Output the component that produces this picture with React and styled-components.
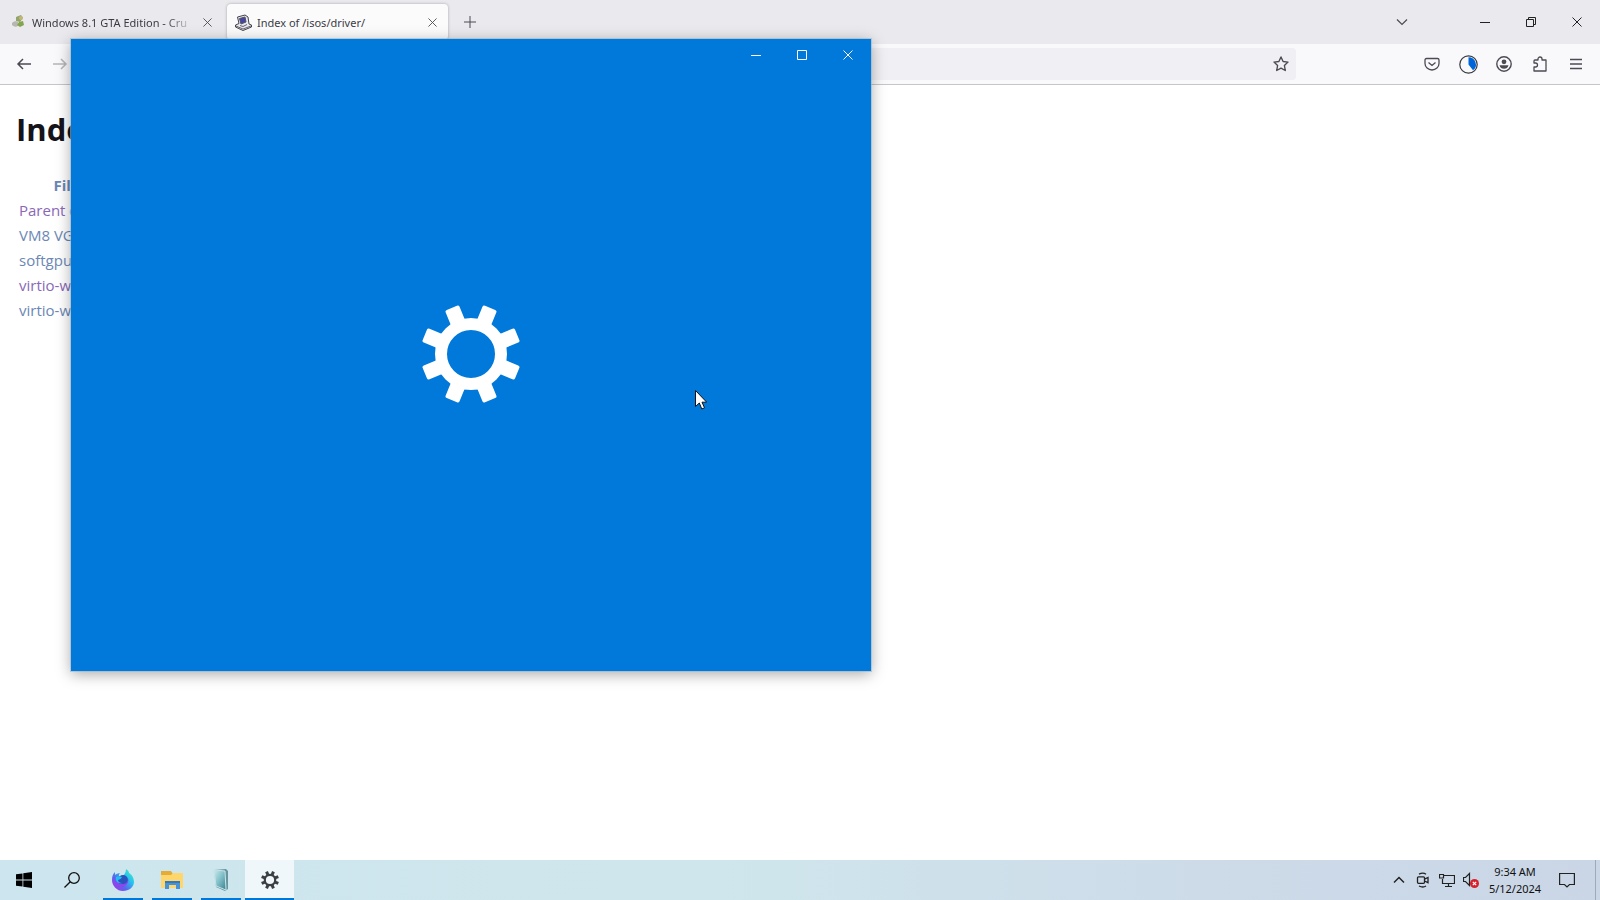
import styled, { createGlobalStyle } from 'styled-components'

const GlobalStyle = createGlobalStyle`
  * {
    box-sizing: border-box;
  }
  body {
    margin: 0;
    font-family: 'Noto Sans', 'Open Sans', sans-serif;
    color: #15141a;
    overflow: hidden;
  }
  button {
    font: inherit;
    color: inherit;
    border: 0;
    padding: 0;
    background: transparent;
  }
  svg {
    display: block;
    flex: none;
  }
`

const Desktop = styled.div`
  position: relative;
  display: flex;
  flex-direction: column;
  height: 100vh;
  background: #fff;
`

const Browser = styled.main`
  flex: 1;
  display: flex;
  flex-direction: column;
  min-height: 0;
`

const TabBar = styled.div`
  display: flex;
  align-items: stretch;
  height: 44px;
  background: #eae9ed;
`

const Tab = styled.div`
  display: flex;
  align-items: center;
  gap: 5px;
  width: ${({ $active }) => ($active ? '221px' : '223px')};
  margin: 4px 4px 4px 0;
  padding: 0 8px 0 ${({ $active }) => ($active ? '8px' : '11px')};
  border-radius: 4px;
  font-size: 11px;
  color: #3c3b44;
  background: ${({ $active }) => ($active ? '#fbfbfc' : 'transparent')};
  box-shadow: ${({ $active }) => ($active ? '0 0 3px rgba(0, 0, 0, 0.3)' : 'none')};
`

const TabTitle = styled.span`
  flex: 1;
  overflow: hidden;
  white-space: nowrap;
  mask-image: ${({ $fade }) => ($fade ? 'linear-gradient(to left, transparent, #000 28px)' : 'none')};
`

const IconButton = styled.button`
  display: grid;
  place-items: center;
  width: ${({ $width }) => $width || 36}px;
  height: ${({ $height }) => $height || 32}px;
  color: ${({ $color }) => $color || '#4c4b53'};
`

const TabListButton = styled(IconButton)`
  margin-right: 48px;
`

const WindowButtons = styled.div`
  display: flex;
  align-items: center;
  margin-left: auto;
`

const Toolbar = styled.div`
  display: flex;
  align-items: center;
  height: 41px;
  padding: 0 6px;
  background: #f9f9fb;
  border-bottom: 1px solid #c6c6c9;
`

const AddressBar = styled.div`
  flex: 1;
  display: flex;
  align-items: center;
  height: 32px;
  margin: 0 118px 0 190px;
  border-radius: 4px;
  background: #f0f0f4;
`

const AddressInput = styled.input`
  flex: 1;
  border: 0;
  background: transparent;
  outline: none;
`

const Page = styled.section`
  flex: 1;
  padding: 23px 16px;
  font-family: 'Open Sans', 'Noto Sans', sans-serif;
`

const Heading = styled.h1`
  margin: 0 0 23px;
  font-size: 31px;
  line-height: 42px;
  font-weight: 700;
  white-space: nowrap;
`

const FileTable = styled.table`
  border-collapse: collapse;
  font-size: 15px;
  line-height: 25px;

  th,
  td {
    padding: 0 3px;
    white-space: nowrap;
  }
  th {
    width: 150px;
    text-align: center;
  }
`

const FileLink = styled.a`
  text-decoration: none;
  color: ${({ $visited }) => ($visited ? '#8a68b8' : '#6b87b5')};
`

const SettingsWindow = styled.section`
  position: absolute;
  top: 39px;
  left: 71px;
  width: 800px;
  height: 632px;
  display: flex;
  flex-direction: column;
  color: #fff;
  background: #0079da;
  box-shadow: 0 0 0 1px rgba(150, 185, 205, 0.6), 0 3px 14px rgba(0, 0, 0, 0.35);
`

const TitleBar = styled.header`
  display: flex;
  justify-content: flex-end;
  height: 32px;
`

const Splash = styled.div`
  flex: 1;
  display: grid;
  place-items: center;
  padding-bottom: 34px;
`

const Pointer = styled.svg`
  position: absolute;
  top: 390px;
  left: 695px;
`

const Taskbar = styled.footer`
  display: flex;
  height: 40px;
  color: #111;
  background: linear-gradient(to right, #cde5ee, #cfe6ec 45%, #cddbe9 75%, #cad6e6);
`

const TaskButton = styled.button`
  display: grid;
  place-items: center;
  width: 48px;
  height: 40px;
  background-color: ${({ $active }) => ($active ? '#eff7fa' : 'transparent')};
`

const RunningApps = styled.div`
  display: flex;
  margin-left: 2px;
`

const RunningButton = styled(TaskButton)`
  width: 49px;
  background-image: linear-gradient(#0078d7, #0078d7);
  background-size: ${({ $active }) => ($active ? '100%' : '40px')} 2px;
  background-position: bottom center;
  background-repeat: no-repeat;
`

const Tray = styled.div`
  display: flex;
  align-items: center;
  margin-left: auto;
`

const Clock = styled.time`
  width: 64px;
  font-size: 11px;
  line-height: 17px;
  text-align: center;
  white-space: nowrap;
`

const ShowDesktop = styled.button`
  width: 5px;
  height: 40px;
  margin-left: 8px;
  border-left: 1px solid #9faab8;
`

const files = [
  { name: 'Parent directory/', visited: true },
  { name: 'VM8 VGA driver/' },
  { name: 'softgpu.iso' },
  { name: 'virtio-win.iso', visited: true },
  { name: 'virtio-win-old.iso' },
]

const toothAngles = [22.5, 67.5, 112.5, 157.5, 202.5, 247.5, 292.5, 337.5]

function Icon({ size = 16, box = 16, stroke = 1, children }) {
  return (
    <svg
      width={size}
      height={size}
      viewBox={`0 0 ${box} ${box}`}
      fill="none"
      stroke="currentColor"
      strokeWidth={stroke}
      aria-hidden="true"
    >
      {children}
    </svg>
  )
}

const CloseIcon = ({ size = 10 }) => (
  <Icon size={size} box={10}>
    <path d="M.5.5l9 9M9.5.5l-9 9" />
  </Icon>
)

const MinimizeIcon = () => (
  <Icon size={10} box={10}>
    <path d="M0 5.5h10" />
  </Icon>
)

const MaximizeIcon = () => (
  <Icon size={10} box={10}>
    <path d="M.5.5h9v9h-9z" />
  </Icon>
)

const RestoreIcon = () => (
  <Icon size={10} box={10}>
    <path d="M.5 2.5h7v7h-7zM2.5 2.5v-2h7v7h-2" />
  </Icon>
)

function SettingsGear() {
  return (
    <svg width="98" height="98" viewBox="-49 -49 98 98" aria-label="Settings">
      <circle r="30" fill="none" stroke="#fff" strokeWidth="12" />
      {toothAngles.map((angle) => (
        <rect key={angle} x="-7.5" y="-50" width="15" height="19" rx="2" fill="#fff" transform={`rotate(${angle})`} />
      ))}
    </svg>
  )
}

function SmallGear() {
  return (
    <svg width="18" height="18" viewBox="-9 -9 18 18" aria-hidden="true">
      <circle r="5.2" fill="none" stroke="#3b3f42" strokeWidth="2.2" />
      {toothAngles.map((angle) => (
        <rect key={angle} x="-1.5" y="-9" width="3" height="3.6" fill="#3b3f42" transform={`rotate(${angle})`} />
      ))}
    </svg>
  )
}

function GreenFavicon() {
  return (
    <svg width="16" height="16" viewBox="0 0 16 16" aria-hidden="true">
      <path d="M1 9c2-2 4-2 6-1v4c-2 1-4 1-6-1z" fill="#b5b8b0" />
      <path d="M5 3l5-2 2 3-3 4-4-1z" fill="#91a46b" />
      <path d="M8 8l4-1 1 4-4 2-3-2z" fill="#83a54b" />
      <circle cx="10" cy="4" r="2" fill="#c4b678" />
    </svg>
  )
}

function ComputerFavicon() {
  return (
    <svg width="17" height="17" viewBox="0 0 17 17" aria-hidden="true">
      <path d="M2.5 3L10 1l3 2 1 7 2.5 1v2L8 16.5.5 13v-2L4 9.5z" fill="#e8e8ee" stroke="#44444c" />
      <path d="M4.5 4.5L10 3l1 5-5 2z" fill="#4545a8" stroke="#55555f" />
      <path d="M1 12l7 3 8-3M5 11.5l3 1 4-2" fill="none" stroke="#66666f" />
    </svg>
  )
}

function FirefoxIcon() {
  return (
    <svg width="24" height="24" viewBox="0 0 24 24" aria-hidden="true">
      <defs>
        <linearGradient id="fox" x1="1" y1="0" x2="0" y2="1">
          <stop offset="0" stopColor="#4ff0b8" />
          <stop offset=".35" stopColor="#24c4ee" />
          <stop offset=".65" stopColor="#5b62ef" />
          <stop offset="1" stopColor="#b72be2" />
        </linearGradient>
      </defs>
      <path
        d="M15 1c2 1 3 3 3 4 2 1 5 4 5 9 0 5-5 9-11 9S1 18 1 12c0-4 1-6 3-8v3c1-1 3-2 5-2-1 1-1 2-1 3l3 1c2-2 4-4 4-8z"
        fill="url(#fox)"
      />
      <circle cx="12" cy="12" r="5" fill="#2854bd" />
      <path d="M2 13c2 6 9 8 13 4 2-2 3-4 2-7 0 4-2 6-6 6-3 0-4-1-5-3z" fill="#8d45ed" />
      <path d="M5 9c2-1 4-1 6 0-1 2-2 2-4 3 0 2 2 3 4 3-4 1-7-2-6-6z" fill="#22bdf0" />
    </svg>
  )
}

function FolderIcon() {
  return (
    <svg width="22" height="20" viewBox="0 0 22 20" aria-hidden="true">
      <path d="M0 1h10l2 3h10v14H0z" fill="#e5ab37" />
      <path d="M12 3h10v15H0V5h10z" fill="#ffd66b" />
      <path d="M4 19v-8h15v8h-4v-4H8v4z" fill="#4592d8" />
      <path d="M4 11h15v2H4z" fill="#3577bb" />
    </svg>
  )
}

function GlassIcon() {
  return (
    <svg width="16" height="24" viewBox="0 0 16 24" aria-hidden="true">
      <defs>
        <linearGradient id="glass" x1="0" y1="0" x2="1" y2="1">
          <stop offset="0" stopColor="#c9ecef" />
          <stop offset=".5" stopColor="#7fbdc6" />
          <stop offset="1" stopColor="#37808e" />
        </linearGradient>
      </defs>
      <path d="M1 2l12-1 2 2v18l-3 2-9-4z" fill="#67959f" />
      <path d="M1 2l11 1 1 19-10-4z" fill="url(#glass)" stroke="#c7e5e8" />
    </svg>
  )
}

function BrowserTabs() {
  return (
    <TabBar>
      <Tab>
        <GreenFavicon />
        <TabTitle $fade>Windows 8.1 GTA Edition - Cru</TabTitle>
        <IconButton $width={16} $height={20} aria-label="Close tab">
          <CloseIcon size={9} />
        </IconButton>
      </Tab>
      <Tab $active>
        <ComputerFavicon />
        <TabTitle>Index of /isos/driver/</TabTitle>
        <IconButton $width={16} $height={20} aria-label="Close tab">
          <CloseIcon size={9} />
        </IconButton>
      </Tab>
      <IconButton $height={44} aria-label="New tab">
        <Icon size={12} box={12}>
          <path d="M6 0v12M0 6h12" />
        </Icon>
      </IconButton>
      <WindowButtons>
        <TabListButton $width={24} aria-label="List all tabs">
          <Icon size={12} box={12} stroke={1.2}>
            <path d="M1 3.5l5 5 5-5" />
          </Icon>
        </TabListButton>
        <IconButton $width={46} $color="#222" aria-label="Minimize">
          <MinimizeIcon />
        </IconButton>
        <IconButton $width={46} $color="#222" aria-label="Restore">
          <RestoreIcon />
        </IconButton>
        <IconButton $width={46} $color="#222" aria-label="Close">
          <CloseIcon />
        </IconButton>
      </WindowButtons>
    </TabBar>
  )
}

function BrowserToolbar() {
  return (
    <Toolbar>
      <IconButton aria-label="Back">
        <Icon stroke={1.5}>
          <path d="M15 8H2M7 3L2 8l5 5" />
        </Icon>
      </IconButton>
      <IconButton $color="#b5b5ba" aria-label="Forward">
        <Icon stroke={1.5}>
          <path d="M1 8h13M9 3l5 5-5 5" />
        </Icon>
      </IconButton>
      <AddressBar>
        <AddressInput aria-label="Address" />
        <IconButton $width={30} aria-label="Bookmark this page">
          <Icon stroke={1.4}>
            <path
              d="M8 1l2.1 4.5 4.9.6-3.6 3.4.9 5L8 12.1l-4.3 2.4.9-5L1 6.1l4.9-.6z"
              strokeLinejoin="round"
            />
          </Icon>
        </IconButton>
      </AddressBar>
      <IconButton aria-label="Save to Pocket">
        <Icon stroke={1.3}>
          <path d="M2.5 2.5h11q1.5 0 1.5 1.5v3.5a7 6.5 0 01-14 0V4q0-1.5 1.5-1.5zM4.5 6.5L8 9.5l3.5-3" />
        </Icon>
      </IconButton>
      <IconButton $color="#38383d" aria-label="Download progress">
        <Icon size={19} box={19} stroke={1.2}>
          <circle cx="9.5" cy="9.5" r="8.7" />
          <path d="M9.5 2.2a7.3 7.3 0 014.5 13.1L9.5 9.5z" fill="#0065d8" stroke="none" />
        </Icon>
      </IconButton>
      <IconButton aria-label="Account">
        <Icon stroke={1.4}>
          <circle cx="8" cy="8" r="7.2" />
          <circle cx="8" cy="5.8" r="2.4" fill="currentColor" stroke="none" />
          <path d="M3.5 9.3h9c-.5 2.5-2.2 3.5-4.5 3.5s-4-1-4.5-3.5z" fill="currentColor" stroke="none" />
        </Icon>
      </IconButton>
      <IconButton aria-label="Extensions">
        <Icon stroke={1.3}>
          <path d="M2 15v-4h1.5a1.7 1.7 0 000-4H2V5q0-1 1-1h3V3a2 2 0 014 0v1h4v11z" strokeLinejoin="round" />
        </Icon>
      </IconButton>
      <IconButton aria-label="Open menu">
        <Icon stroke={1.3}>
          <path d="M2 3.5h12M2 8h12M2 12.5h12" />
        </Icon>
      </IconButton>
    </Toolbar>
  )
}

function Listing() {
  return (
    <Page>
      <Heading>Index of /isos/driver/</Heading>
      <FileTable>
        <thead>
          <tr>
            <th scope="col">
              <FileLink href="#name">File Name</FileLink>
            </th>
          </tr>
        </thead>
        <tbody>
          {files.map((file) => (
            <tr key={file.name}>
              <td>
                <FileLink href="#file" $visited={file.visited}>
                  {file.name}
                </FileLink>
              </td>
            </tr>
          ))}
        </tbody>
      </FileTable>
    </Page>
  )
}

function Settings() {
  return (
    <SettingsWindow aria-label="Settings">
      <TitleBar>
        <IconButton $width={46} $color="#fff" aria-label="Minimize">
          <MinimizeIcon />
        </IconButton>
        <IconButton $width={46} $color="#fff" aria-label="Maximize">
          <MaximizeIcon />
        </IconButton>
        <IconButton $width={46} $color="#fff" aria-label="Close">
          <CloseIcon />
        </IconButton>
      </TitleBar>
      <Splash>
        <SettingsGear />
      </Splash>
    </SettingsWindow>
  )
}

function SystemTaskbar() {
  return (
    <Taskbar>
      <TaskButton aria-label="Start">
        <svg width="16" height="16" viewBox="0 0 16 16" aria-hidden="true">
          <path d="M0 2.3l6.5-.9v6.2H0zM7.3 1.3L16 0v7.6H7.3zM0 8.4h6.5v6.2L0 13.7zM7.3 8.4H16V16l-8.7-1.3z" />
        </svg>
      </TaskButton>
      <TaskButton aria-label="Search">
        <Icon stroke={1.3}>
          <circle cx="10" cy="6" r="5.3" />
          <path d="M6.3 9.7L.5 15.5" />
        </Icon>
      </TaskButton>
      <RunningApps>
        <RunningButton aria-label="Firefox">
          <FirefoxIcon />
        </RunningButton>
        <RunningButton aria-label="File Explorer">
          <FolderIcon />
        </RunningButton>
        <RunningButton aria-label="Server">
          <GlassIcon />
        </RunningButton>
        <RunningButton $active aria-label="Settings">
          <SmallGear />
        </RunningButton>
      </RunningApps>
      <Tray>
        <IconButton $width={24} $color="#222" aria-label="Show hidden icons">
          <Icon size={12} box={12} stroke={1.5}>
            <path d="M1 8.5l5-5 5 5" />
          </Icon>
        </IconButton>
        <IconButton $width={24} $color="#222" aria-label="Meet now">
          <Icon stroke={1.3}>
            <rect x="2.5" y="4.8" width="7" height="6.5" rx="1" />
            <path d="M9.5 7.2L13 5.5v5.2L9.5 9M4 2.2q4-2 7 0M4 14q4 2 7 0" />
          </Icon>
        </IconButton>
        <IconButton $width={24} $color="#222" aria-label="Network">
          <Icon stroke={1.2}>
            <path d="M5 3.5h10.5v8h-12V7M.5 2.5h4V6h-4zM9.5 11.5v3M6 14.5h7" />
          </Icon>
        </IconButton>
        <IconButton $width={24} $color="#222" aria-label="Volume muted">
          <Icon stroke={1.2}>
            <path d="M.5 5.5h2l4-4v12l-4-4h-2z" />
            <circle cx="11.5" cy="11.5" r="4.5" fill="#d71f2b" stroke="none" />
            <path d="M9.8 9.8l3.4 3.4M13.2 9.8l-3.4 3.4" stroke="#fff" />
          </Icon>
        </IconButton>
        <Clock dateTime="2024-05-12T09:34">
          9:34 AM
          <br />
          5/12/2024
        </Clock>
        <IconButton $width={40} $height={40} $color="#222" aria-label="Notifications">
          <Icon stroke={1.2}>
            <path d="M.6 1.5h14.8v11h-4.9L8 15l-2.5-2.5H.6z" />
          </Icon>
        </IconButton>
        <ShowDesktop aria-label="Show desktop" />
      </Tray>
    </Taskbar>
  )
}

export default function App() {
  return (
    <Desktop>
      <GlobalStyle />
      <Browser>
        <BrowserTabs />
        <BrowserToolbar />
        <Listing />
      </Browser>
      <SystemTaskbar />
      <Settings />
      <Pointer width="12" height="20" viewBox="0 0 12 20" aria-hidden="true">
        <path d="M.5.5v16L4.300 13l2.500 6 2.700-1.200L7 12.200h4.700z" fill="#fff" stroke="#111" />
      </Pointer>
    </Desktop>
  )
}
